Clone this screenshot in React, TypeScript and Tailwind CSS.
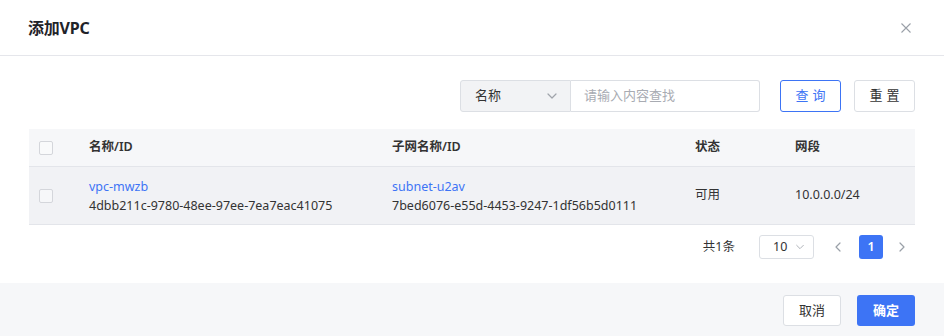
import React from "react";

const font = { fontFamily: '"Noto Sans", "Noto Sans CJK SC", sans-serif' };

function Chevron({ dir, className }: { dir: "down" | "left" | "right"; className?: string }) {
  const d =
    dir === "down" ? "M2 4 L6 8 L10 4" : dir === "left" ? "M8 2 L4 6 L8 10" : "M4 2 L8 6 L4 10";
  return (
    <svg width="12" height="12" viewBox="0 0 12 12" className={className} fill="none">
      <path d={d} stroke="currentColor" strokeWidth="1.2" strokeLinecap="round" strokeLinejoin="round" />
    </svg>
  );
}

function Checkbox() {
  return <div className="w-[14px] h-[14px] border border-[#d4d6db] rounded-[2px] bg-white/40" />;
}

export default function App() {
  return (
    <div style={font} className="w-[944px] h-[336px] bg-white flex flex-col overflow-hidden text-[#1f2329]">
      <div className="h-[56px] shrink-0 flex items-center justify-between pl-[28px] pr-[33px] border-b border-[#e5e6eb]">
        <div className="text-[16px] font-bold text-[#1f2329] tracking-[-0.2px]">添加VPC</div>
        <svg width="10" height="10" viewBox="0 0 10 10" className="text-[#9aa0a8]">
          <path d="M0.5 0.5 L9.5 9.5 M9.5 0.5 L0.5 9.5" stroke="currentColor" strokeWidth="1.1" />
        </svg>
      </div>
      <div className="flex flex-col px-[29px] pt-[24px]">
        <div className="flex justify-end items-center h-[32px]">
          <div className="flex h-[32px]">
            <div className="w-[111px] h-[32px] flex items-center justify-between pl-[14px] pr-[12px] bg-[#f2f3f5] border border-[#dcdfe4] rounded-l-[3px] text-[13px] text-[#333]">
              <span>名称</span>
              <Chevron dir="down" className="text-[#a0a4ab]" />
            </div>
            <div className="w-[189px] h-[32px] flex items-center pl-[13px] border border-l-0 border-[#dcdfe4] rounded-r-[3px] text-[13px] text-[#a8abb2]">
              请输入内容查找
            </div>
          </div>
          <div className="ml-[20px] w-[61px] h-[32px] flex items-center justify-center border border-[#3d74f5] rounded-[3px] text-[13px] text-[#3d74f5] tracking-[4px] pl-[4px]">
            查询
          </div>
          <div className="ml-[13px] w-[61px] h-[32px] flex items-center justify-center border border-[#dcdfe4] rounded-[3px] text-[13px] text-[#333] tracking-[4px] pl-[4px]">
            重置
          </div>
        </div>
        <div className="mt-[17px] flex flex-col text-[12.5px]">
          <div className="h-[38px] flex items-center bg-[#f6f7f9] border-b border-[#e3e5ea] font-semibold text-[#333]">
            <div className="w-[60px] pl-[10px]"><Checkbox /></div>
            <div className="w-[303px]">名称/ID</div>
            <div className="w-[303px]">子网名称/ID</div>
            <div className="w-[100px]">状态</div>
            <div>网段</div>
          </div>
          <div className="h-[58px] flex items-center bg-[#f1f2f5] border-b border-[#e3e5ea] text-[#333]">
            <div className="w-[60px] pl-[10px]"><Checkbox /></div>
            <div className="w-[303px] flex flex-col leading-[19px]">
              <span className="text-[#3d74f5]">vpc-mwzb</span>
              <span>4dbb211c-9780-48ee-97ee-7ea7eac41075</span>
            </div>
            <div className="w-[303px] flex flex-col leading-[19px]">
              <span className="text-[#3d74f5]">subnet-u2av</span>
              <span>7bed6076-e55d-4453-9247-1df56b5d0111</span>
            </div>
            <div className="w-[100px]">可用</div>
            <div>10.0.0.0/24</div>
          </div>
        </div>
        <div className="mt-[10px] h-[24px] flex items-center justify-end pr-[7px] text-[12.5px] text-[#333]">
          <span>共1条</span>
          <div className="ml-[24px] w-[55px] h-[24px] flex items-center justify-between pl-[13px] pr-[8px] border border-[#dcdfe4] rounded-[3px]">
            <span>10</span>
            <Chevron dir="down" className="text-[#b0b4ba] w-[10px]" />
          </div>
          <Chevron dir="left" className="ml-[18px] text-[#9aa0a8]" />
          <div className="ml-[15px] w-[24px] h-[24px] rounded-[3px] bg-[#3d74f5] text-white flex items-center justify-center font-semibold">1</div>
          <Chevron dir="right" className="ml-[13px] text-[#9aa0a8]" />
        </div>
      </div>
      <div className="mt-[24px] flex-1 bg-[#f6f7f9] flex justify-end items-start pt-[12px] pr-[29px]">
        <div className="w-[58px] h-[31px] flex items-center justify-center bg-white border border-[#dcdfe4] rounded-[3px] text-[13px] text-[#333]">
          取消
        </div>
        <div className="ml-[16px] w-[58px] h-[31px] flex items-center justify-center bg-[#3d74f5] rounded-[3px] text-[13px] text-white font-semibold">
          确定
        </div>
      </div>
    </div>
  );
}
